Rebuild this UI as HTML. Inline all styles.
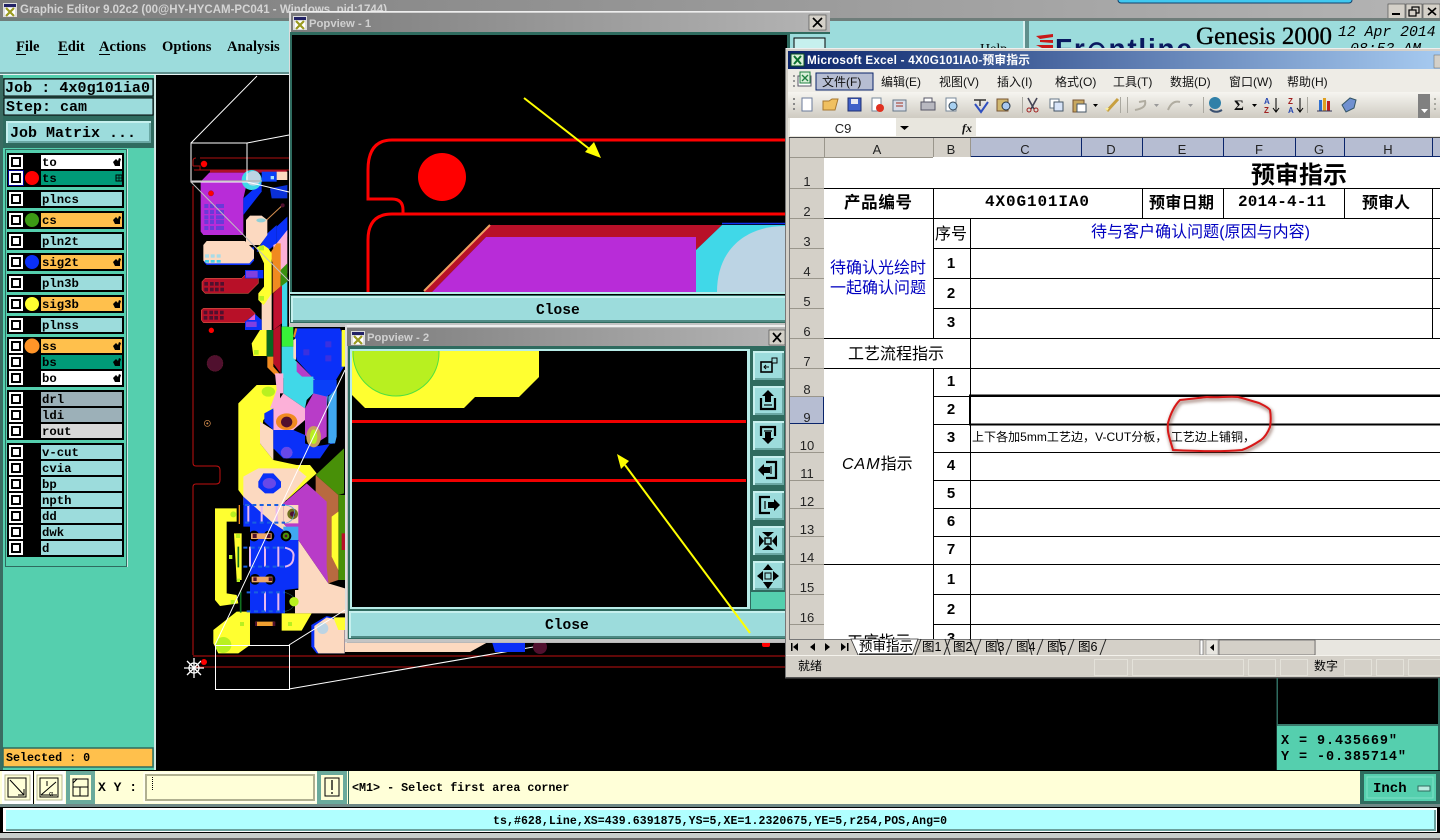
<!DOCTYPE html>
<html><head><meta charset="utf-8"><title>Graphic Editor</title>
<style>
html,body{margin:0;padding:0;background:#000;width:1440px;height:840px;overflow:hidden}
svg{display:block;position:absolute;left:0;top:0}
text{white-space:pre}
.m{font-family:"Liberation Mono",monospace;font-weight:bold;fill:#000}
.s{font-family:"Liberation Serif",serif}
.x{font-family:"Liberation Sans","Noto Sans CJK SC",sans-serif;fill:#000}
.b{font-weight:bold}
.u{fill:#0000c0}
.lay{font-family:"Liberation Mono",monospace;font-weight:bold;font-size:12.3px;fill:#000}
.h{font-family:"Liberation Sans",sans-serif;font-size:13px;fill:#222;text-anchor:middle}
.n{font-family:"Liberation Sans",sans-serif;font-weight:bold;font-size:15px;fill:#000;text-anchor:middle}
.mn{font-family:"Liberation Sans","Noto Sans CJK SC",sans-serif;font-size:12px;fill:#111}
</style></head><body>
<svg width="1440" height="840" viewBox="0 0 1440 840" xmlns="http://www.w3.org/2000/svg">
<defs>
<linearGradient id="gt" x1="0" x2="1" y1="0" y2="0"><stop offset="0" stop-color="#7c7c7c"/><stop offset="1" stop-color="#b4b4b4"/></linearGradient>
<linearGradient id="ge" x1="0" x2="1" y1="0" y2="0"><stop offset="0" stop-color="#0a246a"/><stop offset="1" stop-color="#a6caf0"/></linearGradient>
<linearGradient id="gb" x1="0" x2="0" y1="0" y2="1"><stop offset="0" stop-color="#f6f5f0"/><stop offset="1" stop-color="#cfcbc2"/></linearGradient>
<filter id="blur" x="-10%" y="-10%" width="120%" height="120%"><feGaussianBlur stdDeviation="1.6"/></filter>
<g id="cb"><rect x="0" y="0" width="14" height="14" fill="#fff"/><rect x="2" y="2" width="10" height="10" fill="#000"/><rect x="4" y="4" width="6" height="6" fill="#fff"/></g>
<path id="hand" d="M0 4 L3 1 L5 3 L6 0 L8 1 L7 4 L7 8 L2 8 Z" fill="#000"/>
<g id="ico"><rect x="0" y="0" width="14" height="14" fill="#ddd"/><rect x="1" y="1" width="12" height="3" fill="#226"/><rect x="2" y="5" width="10" height="8" fill="#fff"/><path d="M3 5 L11 13 M11 5 L3 13" stroke="#9a9a20" stroke-width="2.2"/></g>
<g id="sb"><rect x="0" y="0" width="33" height="31" fill="#2f6b5f"/><rect x="1" y="1" width="31" height="29" fill="#c6f0ee"/><rect x="3" y="3" width="29" height="27" fill="#6aa8a4"/><rect x="3" y="3" width="27" height="25" fill="#9cdcdc"/></g>
<clipPath id="c1"><rect x="292" y="35" width="493" height="257"/></clipPath>
<clipPath id="c2"><rect x="352" y="351" width="395" height="256"/></clipPath>
<clipPath id="clogo"><rect x="1030" y="22" width="410" height="26"/></clipPath>
<clipPath id="cgrid"><rect x="790" y="137" width="650" height="502"/></clipPath>
</defs>

<rect width="1440" height="840" fill="#000"/>

<!-- main title -->
<rect x="0" y="0" width="1440" height="18" fill="url(#gt)"/>
<use href="#ico" x="3" y="3"/>
<text x="20" y="13" font-family="Liberation Sans" font-weight="bold" font-size="11.5" fill="#d4d4d4">Graphic Editor 9.02c2 (00@HY-HYCAM-PC041 - Windows, pid:1744)</text>
<rect x="1118" y="-4" width="234" height="7" rx="3" fill="#40c8f0" stroke="#14406a"/>
<g>
<rect x="1388" y="4" width="17" height="15" fill="#d4d0c8" stroke="#444" stroke-width=".6"/><rect x="1392" y="13" width="8" height="2" fill="#000"/>
<rect x="1406" y="4" width="16" height="15" fill="#d4d0c8" stroke="#444" stroke-width=".6"/><rect x="1412" y="7" width="7" height="6" fill="none" stroke="#000" stroke-width="1.2"/><rect x="1409" y="10" width="7" height="6" fill="#d4d0c8" stroke="#000" stroke-width="1.2"/>
<rect x="1423" y="4" width="17" height="15" fill="#d4d0c8" stroke="#444" stroke-width=".6"/><path d="M1428 8 L1436 15 M1436 8 L1428 15" stroke="#000" stroke-width="1.6"/>
</g>

<!-- menu band -->
<rect x="0" y="18" width="1440" height="3" fill="#6f7d7a"/>
<rect x="0" y="21" width="1440" height="53" fill="#9cdcdc"/>
<rect x="0" y="72" width="1440" height="2" fill="#5f8f8c"/>
<rect x="0" y="74" width="1440" height="1" fill="#e8f4f4"/>
<g class="s b" font-size="14.6" font-weight="bold" fill="#000">
<text x="16" y="51">File</text><text x="58" y="51">Edit</text><text x="99" y="51">Actions</text><text x="162" y="51">Options</text><text x="227" y="51">Analysis</text>
</g>
<g stroke="#000" stroke-width="1"><path d="M16 54.5h10M58 54.5h10M99 54.5h11"/></g>
<text x="980" y="53" class="s" font-size="14" fill="#000">Help</text>
<rect x="1023" y="21" width="2" height="30" fill="#d8f0f0"/><rect x="1025" y="21" width="4" height="30" fill="#5f8f8c"/>
<g clip-path="url(#clogo)">
<path d="M1036 36 L1053 34 L1053 37 L1040 39 Z M1040 40 L1053 40 L1053 43 L1040 42Z M1036 45 L1053 45 L1053 48 L1042 48 Z" fill="#c81818"/>
<text x="1055" y="58" font-family="Liberation Sans" font-weight="bold" font-size="28" fill="#0a1a60" textLength="137">Fr<tspan font-size="24">⊙</tspan>ntline</text>
</g>
<text x="1196" y="44" class="s" font-size="25" fill="#000" stroke="#000" stroke-width=".35" textLength="136">Genesis 2000</text>
<text x="1338" y="36" font-family="Liberation Mono" font-style="italic" font-size="14.8" fill="#000">12 Apr 2014</text>
<text x="1350" y="53" font-family="Liberation Mono" font-style="italic" font-size="14.8" fill="#000">08:53 AM</text>

<!-- left panel -->
<rect x="0" y="75" width="155" height="696" fill="#55cfae"/>
<rect x="0" y="75" width="3" height="696" fill="#3a6c62"/>
<rect x="154" y="75" width="2" height="696" fill="#cfe8e4"/>
<rect x="3" y="78" width="151" height="70" fill="#2f6b5f"/>
<rect x="4" y="79" width="149" height="17" fill="#9cdcdc" stroke="#000"/>
<rect x="4" y="98" width="149" height="17" fill="#9cdcdc" stroke="#000"/>
<text x="5" y="92" class="m" font-size="15" textLength="145">Job : 4x0g101ia0</text>
<text x="6" y="111" class="m" font-size="15">Step: cam</text>
<rect x="6" y="121" width="145" height="22" fill="#c6f0ee"/><rect x="8" y="123" width="143" height="20" fill="#6aa8a4"/><rect x="8" y="123" width="141" height="18" fill="#9cdcdc"/>
<text x="10" y="137" class="m" font-size="15">Job Matrix ...</text>

<rect x="5" y="149" width="122" height="418" fill="#2f6b5f"/>
<rect x="127" y="149" width="1" height="418" fill="#cfe8e4"/>
<rect x="6" y="150" width="120" height="416" fill="#55cfae"/>

<!-- layer groups -->
<rect x="7" y="153" width="117" height="34" fill="#000"/>
<rect x="7" y="190" width="117" height="18" fill="#000"/>
<rect x="7" y="211" width="117" height="18" fill="#000"/>
<rect x="7" y="232" width="117" height="18" fill="#000"/>
<rect x="7" y="253" width="117" height="18" fill="#000"/>
<rect x="7" y="274" width="117" height="18" fill="#000"/>
<rect x="7" y="295" width="117" height="18" fill="#000"/>
<rect x="7" y="316" width="117" height="18" fill="#000"/>
<rect x="7" y="337" width="117" height="50" fill="#000"/>
<rect x="7" y="390" width="117" height="50" fill="#000"/>
<rect x="7" y="443" width="117" height="114" fill="#000"/>

<rect x="41" y="155" width="81" height="14" fill="#fff"/>
<rect x="41" y="171" width="81" height="14" fill="#009a78"/>
<rect x="41" y="192" width="81" height="14" fill="#9cdcdc"/>
<rect x="41" y="213" width="81" height="14" fill="#ffc04c"/>
<rect x="41" y="234" width="81" height="14" fill="#9cdcdc"/>
<rect x="41" y="255" width="81" height="14" fill="#ffc04c"/>
<rect x="41" y="276" width="81" height="14" fill="#9cdcdc"/>
<rect x="41" y="297" width="81" height="14" fill="#ffc04c"/>
<rect x="41" y="318" width="81" height="14" fill="#9cdcdc"/>
<rect x="41" y="339" width="81" height="14" fill="#ffc04c"/>
<rect x="41" y="355" width="81" height="14" fill="#009a78"/>
<rect x="41" y="371" width="81" height="14" fill="#fff"/>
<rect x="41" y="392" width="81" height="14" fill="#9cb0b8"/>
<rect x="41" y="408" width="81" height="14" fill="#9cb0b8"/>
<rect x="41" y="424" width="81" height="14" fill="#d8d8d8"/>
<rect x="41" y="445" width="81" height="14" fill="#9cdcdc"/>
<rect x="41" y="461" width="81" height="14" fill="#9cdcdc"/>
<rect x="41" y="477" width="81" height="14" fill="#9cdcdc"/>
<rect x="41" y="493" width="81" height="14" fill="#9cdcdc"/>
<rect x="41" y="509" width="81" height="14" fill="#9cdcdc"/>
<rect x="41" y="525" width="81" height="14" fill="#9cdcdc"/>
<rect x="41" y="541" width="81" height="14" fill="#9cdcdc"/>

<rect x="8" y="170" width="16" height="16" fill="#000090"/>
<use href="#cb" x="9" y="155"/><use href="#cb" x="9" y="171"/><use href="#cb" x="9" y="192"/><use href="#cb" x="9" y="213"/><use href="#cb" x="9" y="234"/><use href="#cb" x="9" y="255"/><use href="#cb" x="9" y="276"/><use href="#cb" x="9" y="297"/><use href="#cb" x="9" y="318"/><use href="#cb" x="9" y="339"/><use href="#cb" x="9" y="355"/><use href="#cb" x="9" y="371"/><use href="#cb" x="9" y="392"/><use href="#cb" x="9" y="408"/><use href="#cb" x="9" y="424"/><use href="#cb" x="9" y="445"/><use href="#cb" x="9" y="461"/><use href="#cb" x="9" y="477"/><use href="#cb" x="9" y="493"/><use href="#cb" x="9" y="509"/><use href="#cb" x="9" y="525"/><use href="#cb" x="9" y="541"/>

<circle cx="32" cy="178" r="7" fill="#ff0000"/>
<circle cx="32" cy="220" r="7" fill="#3c9a14"/>
<circle cx="32" cy="262" r="7" fill="#0a30f8"/>
<circle cx="32" cy="304" r="7" fill="#ffff30"/>
<circle cx="32" cy="346" r="7.5" fill="#ff9428"/>

<g class="lay">
<text x="42" y="166">to</text><text x="42" y="182">ts</text><text x="42" y="203">plncs</text><text x="42" y="224">cs</text><text x="42" y="245">pln2t</text><text x="42" y="266">sig2t</text><text x="42" y="287">pln3b</text><text x="42" y="308">sig3b</text><text x="42" y="329">plnss</text><text x="42" y="350">ss</text><text x="42" y="366">bs</text><text x="42" y="382">bo</text><text x="42" y="403">drl</text><text x="42" y="419">ldi</text><text x="42" y="435">rout</text><text x="42" y="456">v-cut</text><text x="42" y="472">cvia</text><text x="42" y="488">bp</text><text x="42" y="504">npth</text><text x="42" y="520">dd</text><text x="42" y="536">dwk</text><text x="42" y="552">d</text>
</g>
<use href="#hand" x="113" y="158"/><use href="#hand" x="113" y="216"/><use href="#hand" x="113" y="258"/><use href="#hand" x="113" y="300"/><use href="#hand" x="113" y="342"/><use href="#hand" x="113" y="358"/><use href="#hand" x="113" y="374"/>
<rect x="116" y="175" width="6" height="6" fill="none" stroke="#000"/><path d="M119 175v6M116 178h6" stroke="#000" stroke-width=".7"/>

<rect x="3" y="748" width="150" height="19" fill="#ffc04c" stroke="#2f6b5f" stroke-width="1.5"/>
<text x="6" y="761" class="m" font-size="11.7">Selected : 0</text>

<!-- PCB outline -->
<path d="M193 186 V463 Q193 466 196 466 H216 Q220 466 220 470 V480 Q220 484 216 484 H196 Q193 484 193 487 V655" fill="none" stroke="#c01010" stroke-width="1"/>
<path d="M200 158 H292 M193 166 V161 Q193 158 196 158 M193 166 H200 V170 H194 M200 170 H292" fill="none" stroke="#b01010" stroke-width="1"/>
<path d="M193 656 H785 M193 667 H785" stroke="#c01010" stroke-width="1" fill="none"/>
<circle cx="204" cy="164" r="3.2" fill="#ff0000"/>

<!-- top copper, zoom-3 coordinates -->
<g transform="translate(160,130) scale(.33333)">
<path d="M150 120H380V128H150Z" fill="#b01028"/>
<path d="M122 155L148 128H262V155L250 205V315H130L122 305Z" fill="#b82cd8"/>
<path d="M250 205L305 155V185L250 255Z" fill="#0a30f8"/>
<path d="M305 125H350V155H305Z" fill="#0a40f8"/><rect x="332" y="138" width="10" height="10" fill="#a8e0f8"/>
<path d="M350 125H382V150H350Z" fill="#fcd9c0"/>
<circle cx="275" cy="150" r="30" fill="#40d8e8"/><circle cx="280" cy="145" r="22" fill="#bcd4e4"/>
<path d="M330 175L382 165V205L335 205Z" fill="#0a30d8"/>
<path d="M320 270L365 228" stroke="#d89050" stroke-width="3"/><circle cx="368" cy="226" r="6" fill="#50102e"/>
<path d="M322 310L350 285V340L320 365H290Z" fill="#0a30f8"/>
<path d="M350 290L382 260V320L350 345Z" fill="#0a30f8"/>
<path d="M258 270L270 257H305L322 270V315L300 345H258Z" fill="#fcd9c0"/>
<ellipse cx="303" cy="271" rx="14" ry="6" fill="#90d0d8"/>
<path d="M132 352H282V392L270 405H140L132 396Z" fill="#0a30f8"/>
<path d="M130 345L140 333H255L282 360V385L268 400H140L130 392Z" fill="#fcd9c0"/>
<g fill="#a8dce8"><rect x="135" y="373" width="12" height="10"/><rect x="152" y="373" width="12" height="10"/><rect x="170" y="373" width="12" height="10"/><rect x="135" y="390" width="12" height="8" fill="#48d0e8"/><rect x="152" y="390" width="12" height="8" fill="#48d0e8"/><rect x="170" y="390" width="12" height="8" fill="#48d0e8"/></g>
<path d="M350 340L382 300V430L340 445V345Z" fill="#fcb0d8"/>
<path d="M330 370L350 340H362V470L338 490V400Z" fill="#f08a20"/>
<path d="M340 490L366 465V580L340 600Z" fill="#c01030"/>
<path d="M366 465L382 440V590H366Z" fill="#40d8e8"/>
<path d="M362 420L382 400V455L362 470Z" fill="#389010"/>
<path d="M305 495L335 490V600H305Z" fill="#fcd9c0"/>
<path d="M290 352L310 345L325 355L335 370V490L315 520L310 525L295 510V490L312 470V400Z" fill="#ffff30"/>
<rect x="296" y="347" width="16" height="14" fill="#b8f020"/><rect x="298" y="498" width="14" height="14" fill="#b8f020"/>
<path d="M126 455L135 445H245L255 435H295V460L265 490H135L126 480Z" fill="#b81028" stroke="#f07050" stroke-width="1.5"/>
<g fill="#50102e"><rect x="133" y="456" width="11" height="11"/><rect x="150" y="456" width="11" height="11"/><rect x="165" y="456" width="11" height="11"/><rect x="181" y="456" width="11" height="11"/><rect x="133" y="473" width="11" height="11"/><rect x="150" y="473" width="11" height="11"/><rect x="165" y="473" width="11" height="11"/><rect x="181" y="473" width="11" height="11"/></g>
<path d="M255 420H310V445H255Z" fill="#0a30f8"/><rect x="258" y="423" width="35" height="20" fill="#8040e0"/>
<path d="M124 540L130 535H270L285 550V570L270 578H130L124 570Z" fill="#b81028" stroke="#f07050" stroke-width="1.5"/>
<g fill="#50102e"><rect x="131" y="542" width="11" height="11"/><rect x="148" y="542" width="11" height="11"/><rect x="163" y="542" width="11" height="11"/><rect x="180" y="542" width="11" height="11"/><rect x="131" y="558" width="11" height="11"/><rect x="148" y="558" width="11" height="11"/><rect x="163" y="558" width="11" height="11"/><rect x="180" y="558" width="11" height="11"/></g>
<path d="M255 575L285 552L305 570V600H255Z" fill="#0a30f8"/><rect x="258" y="575" width="32" height="16" fill="#8040e0"/><path d="M265 570L285 552V570Z" fill="#e860d0"/>
<path d="M275 640L300 600H320V678H280Z" fill="#ffff30"/><rect x="282" y="660" width="14" height="14" fill="#b8f020"/>
<path d="M320 600H340V680H320Z" fill="#086820"/>
<path d="M340 600L362 585V730L340 700Z" fill="#b81028"/>
<path d="M322 680H340V710L362 735V752L322 712Z" fill="#f08a20"/>
<path d="M365 590H400V650H365Z" fill="#38f038"/>
<path d="M365 650H402L405 690L460 745V790H425L365 740Z" fill="#40d8e8"/>
<path d="M405 595H412L408 625L400 620Z" fill="#f08a20"/>
<path d="M412 595H540L552 620V710L510 780L460 745L410 690L400 640Z" fill="#0a30f8"/>
<path d="M400 630L408 625V690L400 685Z" fill="#fcd9c0"/>
<g fill="#3a30e0"><rect x="496" y="634" width="18" height="18"/><rect x="430" y="658" width="18" height="18"/><rect x="496" y="676" width="18" height="18"/></g>
<path d="M410 695L460 745V772L410 725Z" fill="#b83cc8"/>
<path d="M460 745L505 780L500 840H460Z" fill="#40a8f0"/>
<path d="M545 600H555V710H545Z" fill="#ffff30"/>
<!-- dots grid on purple -->
<g fill="#6a3ad8"><rect x="133" y="222" width="12" height="12"/><rect x="150" y="222" width="12" height="12"/><rect x="168" y="222" width="12" height="12"/><rect x="180" y="222" width="12" height="12"/><rect x="133" y="240" width="12" height="12"/><rect x="150" y="240" width="12" height="12"/><rect x="168" y="240" width="12" height="12"/><rect x="180" y="240" width="12" height="12"/><rect x="133" y="256" width="12" height="12"/><rect x="150" y="256" width="12" height="12"/><rect x="168" y="256" width="12" height="12"/><rect x="180" y="256" width="12" height="12"/><rect x="133" y="270" width="12" height="12"/><rect x="150" y="270" width="12" height="12"/><rect x="168" y="270" width="12" height="12"/><rect x="180" y="270" width="12" height="12"/><rect x="133" y="288" width="12" height="12"/><rect x="150" y="288" width="12" height="12"/><rect x="168" y="288" width="12" height="12"/><rect x="180" y="288" width="12" height="12"/></g>
<circle cx="153" cy="190" r="8" fill="#ff0000" stroke="#801020"/>
<circle cx="154" cy="601" r="8" fill="#ff0000"/>
<circle cx="165" cy="700" r="24" fill="#50102e" stroke="#903040" stroke-dasharray="3 2"/>
</g>

<!-- lower copper, zoom-4 coordinates -->
<g transform="translate(170,380) scale(.33333)">
<path d="M205 70L260 15H330V60L310 90L280 120L270 190L310 240L380 255H420L440 280L350 360L220 350L205 330Z" fill="#ffff30"/>
<path d="M340 -10H430V40L410 60L405 85L340 40Z" fill="#40d8e8"/>
<path d="M315 -20H340V40H330V60L310 85H300L320 30Z" fill="#fcb0d8"/>
<path d="M310 85L340 40L405 85V120L370 150H310Z" fill="#fcb0d8"/>
<path d="M283 100L310 85V150L283 125Z" fill="#0a30f8"/>
<path d="M270 125L310 150V240L270 190Z" fill="#fcd9c0"/>
<path d="M310 150H370L405 165V190L430 200L495 190V170L450 235H340L310 205Z" fill="#0a30f8"/>
<path d="M430 0H500V30L470 50L430 40Z" fill="#0a40f8"/>
<path d="M475 50L500 25V170L495 190H475Z" fill="#40a8f0"/>
<path d="M405 85L430 40L470 50V170L430 195L405 165Z" fill="#b83cc8"/>
<ellipse cx="350" cy="125" rx="32" ry="25" fill="#f08a20"/><ellipse cx="350" cy="126" rx="17" ry="16" fill="#50102e"/>
<ellipse cx="295" cy="35" rx="20" ry="15" fill="#b8f020"/>
<ellipse cx="431" cy="170" rx="22" ry="32" fill="#c8a060"/><ellipse cx="431" cy="170" rx="11" ry="22" fill="#b8f020"/>
<circle cx="350" cy="218" r="17" fill="#6848e8" stroke="#9070f0" stroke-dasharray="2 2"/>
<path d="M437 285L522 205V340L505 345Z" fill="#489008"/>
<path d="M505 345H530V600H505Z" fill="#489008"/>
<path d="M220 290L265 265H380L410 290L340 370V430L385 480L475 610L525 625V700H375V630H385V480L310 430L220 375Z" fill="#fcd9c0"/>
<path d="M437 285L505 345V600L475 610L437 500Z" fill="#b86a40"/>
<path d="M340 370L410 310L470 365V560L475 610L385 480L340 430Z" fill="#b83cc8"/>
<path d="M485 410L505 395V570L485 530Z" fill="#ffff30"/>
<path d="M265 305L280 280H310L333 305V322L310 340H285L265 322Z" fill="#0a30f8"/><ellipse cx="298" cy="310" rx="20" ry="16" fill="#6848e8"/>
<path d="M220 350L310 430L385 480V625L345 630V700H240V440H220Z" fill="#0a30f8"/>
<path d="M340 375H385V430L340 430Z" fill="#fcd9c0"/>
<circle cx="368" cy="402" r="16" fill="#707020"/><circle cx="368" cy="402" r="8" fill="#50102e"/>
<path d="M340 440L385 440V480H340Z" fill="#40a8f0"/>
<path d="M135 385H200V425H170V640L200 645L205 670L150 678L135 660Z" fill="#ffff30"/>
<path d="M192 460H215V600H200Z" fill="#ffff30"/>
<path d="M130 750L200 695H240V795L205 820H145L130 790Z" fill="#ffff30"/>
<circle cx="160" cy="795" r="24" fill="#b8f020"/>
<path d="M335 700H425L395 752H335Z" fill="#ffff30"/>
<path d="M424 735L470 708L524 720V820H440L424 800Z" fill="#0a30f8"/>
<path d="M433 738L470 712L524 725V820H445L433 800Z" fill="#fcd9c0"/>
<circle cx="458" cy="745" r="17" fill="#bcd4e4"/>
<path d="M490 712H525V750H505Z" fill="#ffff30"/>
<!-- holes -->
<g fill="#000"><circle cx="252" cy="468" r="16"/><circle cx="297" cy="468" r="16"/><circle cx="348" cy="468" r="16"/><circle cx="255" cy="598" r="16"/><circle cx="300" cy="598" r="16"/></g>
<rect x="243" y="460" width="62" height="17" fill="#f0a868"/><rect x="248" y="462" width="12" height="12" fill="#50102e"/><rect x="290" y="462" width="12" height="12" fill="#50102e"/>
<circle cx="348" cy="468" r="10" fill="#489008"/><circle cx="348" cy="468" r="4" fill="#50102e"/>
<rect x="245" y="590" width="62" height="17" fill="#f0a868"/><rect x="250" y="592" width="10" height="11" fill="#50102e"/><rect x="296" y="592" width="10" height="11" fill="#50102e"/>
<rect x="255" y="725" width="60" height="13" rx="3" fill="#f0a030"/><rect x="255" y="725" width="6" height="13" fill="#50102e"/><rect x="308" y="725" width="8" height="13" fill="#50102e"/>
<!-- dashed shapes -->
<g stroke="#e8b8f0" stroke-width="6" fill="none"><path d="M235 375V425M275 375V425M320 375V425"/><path d="M240 500V560M285 500V560M325 500V560"/><path d="M285 635V695M325 635V695"/></g>
<g stroke="#1a60e0" stroke-width="6" stroke-dasharray="12 10" fill="none"><path d="M225 375H345M225 428H345"/><path d="M220 503H345M220 560H345"/><path d="M230 637H345M230 694H345"/></g>
<path d="M345 375Q380 380 372 402Q370 425 345 430" stroke="#50a8e8" stroke-width="2" fill="none"/>
<path d="M345 503Q375 510 370 532Q370 555 345 560" stroke="#e8b8f0" stroke-width="6" fill="none"/>
<path d="M345 637Q380 650 375 665Q370 690 345 694" stroke="#285050" stroke-width="2" fill="none"/><circle cx="372" cy="665" r="14" fill="#b8f020"/>
<path d="M208 375V432" stroke="#f08a20" stroke-width="4"/>
<path d="M205 500V562M212 635V698" stroke="#107020" stroke-width="5"/>
<g fill="#b8f020"><circle cx="190" cy="403" r="9"/><rect x="198" y="462" width="12" height="12"/><rect x="177" y="525" width="10" height="12"/><rect x="200" y="596" width="10" height="10"/><rect x="182" y="660" width="12" height="12"/><rect x="210" y="726" width="12" height="12"/><rect x="354" y="726" width="12" height="12"/></g>
<circle cx="112" cy="130" r="9" fill="none" stroke="#d89050" stroke-width="2"/><circle cx="112" cy="130" r="3" fill="#d89050"/>
<rect x="515" y="460" width="10" height="50" fill="#b81028"/>
</g>

<!-- white projection lines -->
<g fill="none" stroke="#fff" stroke-width="1">
<path d="M191 143H247V182H191Z"/><path d="M191 143L257 76M247 143L289 135M247 182L289 192"/>
<path d="M215.500 645.500H289.500V689.500H215.500Z"/><path d="M215 645L345 370M289 645L345 610M289 689L545 645"/>
<path d="M191 182L289 281" stroke="#c0c0c0"/>
</g>
<path d="M191 181H262" stroke="#b0b0b0" stroke-width="1.2"/>
<!-- bottom-left target -->
<g stroke="#fff" stroke-width="1.3" fill="none"><path d="M184 668H204M194 658V678M187 661L201 675M201 661L187 675"/><circle cx="194" cy="668" r="5"/></g>
<circle cx="204" cy="662" r="3" fill="#ff0000"/>
<!-- strip below popview 2 -->
<path d="M345 642H488L470 652H345Z" fill="#fcd9c0"/><path d="M492 642H525V652H495Z" fill="#0a30f8"/>
<circle cx="540" cy="647" r="7" fill="#50102e"/><rect x="762" y="641" width="8" height="6" rx="2" fill="#ff0000"/>

<!-- POPVIEW 1 -->
<rect x="289" y="11" width="541" height="316" fill="#b8b8b8"/>
<rect x="289" y="11" width="541" height="1.500" fill="#eee"/><rect x="289" y="11" width="2" height="316" fill="#ddd"/>
<rect x="291" y="13" width="537" height="19" fill="url(#gt)"/>
<use href="#ico" x="293" y="16"/>
<text x="309" y="27" font-family="Liberation Sans" font-weight="bold" font-size="11.3" fill="#d0d0d0">Popview - 1</text>
<rect x="809" y="15" width="17" height="15" fill="#d4d0c8" stroke="#444" stroke-width=".6"/><path d="M813 18L822 27M822 18L813 27" stroke="#000" stroke-width="1.7"/>
<rect x="290" y="32" width="540" height="294" fill="#2f6b5f"/>
<rect x="292" y="35" width="495" height="257" fill="#000"/>
<rect x="790" y="34" width="40" height="30" fill="#9cdcdc"/><rect x="794" y="38" width="31" height="30" fill="#c6f0ee" stroke="#000"/>
<g clip-path="url(#c1)">
<path d="M785 140H392Q368 140 368 170V199H392Q403 199 403 210V214M785 214H392Q368 214 368 240V292" fill="none" stroke="#ff0000" stroke-width="3"/>
<circle cx="442" cy="177" r="24" fill="#ff0000"/>
<path d="M490 225H722L696 250V237H486L432 292H424Z" fill="#b81028"/>
<path d="M486 237H696V292H432Z" fill="#b82cd8"/>
<path d="M490 225L424 291" stroke="#f0a060" stroke-width="2"/>
<path d="M696 250L722 225H785V292H696Z" fill="#40d8e8"/>
<path d="M722 223.500H785" stroke="#1030f0" stroke-width="1.500"/>
<path d="M717 292C717 250 745 226 785 226V292Z" fill="#bcd4e4"/>
<path d="M524 98L592 151" stroke="#ffff00" stroke-width="2"/>
<path d="M601 158L585 152L594 142Z" fill="#ffff00"/>
</g>
<rect x="290" y="292" width="540" height="2" fill="#b8ece8"/>
<rect x="290" y="294" width="540" height="1" fill="#000"/>
<rect x="291" y="296" width="495" height="26" fill="#c6f0ee"/><rect x="293" y="298" width="495" height="24" fill="#4f8a84"/><rect x="293" y="298" width="495" height="22" fill="#9cdcdc"/>
<text x="536" y="314" class="m" font-size="14.6">Close</text>
<rect x="289" y="323" width="500" height="4" fill="#c4c4c4"/>

<!-- POPVIEW 2 -->
<rect x="345" y="325" width="440" height="318" fill="#b8b8b8"/>
<rect x="345" y="325" width="440" height="2" fill="#eee"/><rect x="345" y="325" width="2" height="318" fill="#ddd"/>
<rect x="347" y="328" width="438" height="18" fill="url(#gt)"/>
<use href="#ico" x="351" y="331"/>
<text x="367" y="341" font-family="Liberation Sans" font-weight="bold" font-size="11.3" fill="#d0d0d0">Popview - 2</text>
<rect x="769" y="330" width="16" height="15" fill="#d4d0c8" stroke="#444" stroke-width=".6"/><path d="M773 333L781 342M781 333L773 342" stroke="#000" stroke-width="1.7"/>
<rect x="348" y="346" width="437" height="293" fill="#2f6b5f"/>
<rect x="350" y="349" width="400" height="260" fill="#b8ece8"/>
<rect x="352" y="351" width="395" height="256" fill="#000"/>
<g clip-path="url(#c2)">
<path d="M352 351H539V377L519 397H475L464 408H365L352 395Z" fill="#ffff30"/>
<circle cx="396" cy="353" r="43" fill="#b8f020" stroke="#50e040"/>
<path d="M352 421.500H746M352 480.500H746" stroke="#f00000" stroke-width="3"/>
</g>
<rect x="751" y="349" width="34" height="260" fill="#2f6b5f"/>
<use href="#sb" x="752" y="350"/><use href="#sb" x="752" y="385"/><use href="#sb" x="752" y="420"/><use href="#sb" x="752" y="455"/><use href="#sb" x="752" y="490"/><use href="#sb" x="752" y="525"/><use href="#sb" x="752" y="560"/>
<g fill="none" stroke="#000">
<!-- icon 1 -->
<rect x="761" y="362" width="11" height="10" stroke-width="1.6"/><rect x="772" y="358" width="5" height="5" stroke-width="1" fill="#9cdcdc"/><path d="M769 367H764M766 365L764 367L766 369" stroke-width="1"/>
<!-- icon 2: up into tray -->
<path d="M761 398V409H775V398" stroke-width="2.2"/><path d="M764 405H772" stroke-width="1.2"/>
<!-- icon 3: down out of frame -->
<path d="M761 436V427H775V436" stroke-width="2.2"/><path d="M764 431H772" stroke-width="1.2"/>
<!-- icon 4: left -->
<path d="M766 462H776V478H766" stroke-width="2.2"/><path d="M771 466V474" stroke-width="1.2"/>
<!-- icon 5: right -->
<path d="M770 497H760V513H770" stroke-width="2.2"/><path d="M765 501V509" stroke-width="1.2"/>
<rect x="765" y="538" width="6" height="6" stroke-width="1.4"/><rect x="765" y="573" width="6" height="6" stroke-width="1"/>
</g>
<g fill="#000">
<path d="M768 390L762 396H765V402H771V396H774Z"/>
<path d="M768 444L762 438H765V432H771V438H774Z"/>
<path d="M758 470L764 464V467H770V473H764V476Z"/>
<path d="M780 505L774 499V502H768V508H774V511Z"/>
<path d="M762 532H774L768 537ZM762 550H774L768 545ZM759 535V547L764 541ZM777 535V547L772 541Z"/>
<path d="M768 564L763 570H773ZM768 589L763 582H773ZM757 576L763 571V581ZM779 576L773 571V581Z"/>
</g>
<rect x="751" y="592" width="34" height="18" fill="#55cfae"/>
<rect x="348" y="609" width="437" height="2" fill="#2f6b5f"/>
<rect x="349" y="611" width="436" height="27" fill="#c6f0ee"/><rect x="351" y="613" width="434" height="25" fill="#4f8a84"/><rect x="351" y="613" width="434" height="23" fill="#9cdcdc"/>
<text x="545" y="629" class="m" font-size="14.6">Close</text>
<path d="M617 454L629 461L621 469Z" fill="#ffff00"/>
<path d="M625 465L750 633" stroke="#ffff00" stroke-width="2"/>
<rect x="345" y="639" width="440" height="3" fill="#c4c4c4"/>

<!-- EXCEL -->
<rect x="785" y="48" width="655" height="630" fill="#d4d0c8"/>
<rect x="785" y="48" width="655" height="1" fill="#eee"/><rect x="785" y="48" width="1" height="630" fill="#777"/>
<rect x="788" y="51" width="652" height="18" fill="url(#ge)"/>
<rect x="791" y="54" width="13" height="12" fill="#d8f0d8" stroke="#085020"/><path d="M794 56L801 64M801 56L794 64" stroke="#0a7030" stroke-width="2"/>
<text x="807" y="64" class="x b" font-size="11.700" style="fill:#fff" textLength="223">Microsoft Excel - 4X0G101IA0-预审指示</text>
<rect x="1434" y="55" width="8" height="13" fill="#d4d0c8" stroke="#666" stroke-width=".5"/>
<rect x="788" y="69" width="652" height="23" fill="#eeece6"/>
<g fill="#999"><rect x="793" y="75" width="2" height="2"/><rect x="793" y="80" width="2" height="2"/><rect x="793" y="85" width="2" height="2"/></g>
<rect x="798" y="76" width="13" height="10" fill="#fff" stroke="#556"/><rect x="800" y="72" width="10" height="11" fill="#d8f0d8" stroke="#208040"/><path d="M802 75L808 81M808 75L802 81" stroke="#208040" stroke-width="1.4"/>
<rect x="816" y="73" width="57" height="17" fill="#b6bdd2" stroke="#0a246a"/>
<g class="mn">
<text x="822" y="86">文件(F)</text><text x="881" y="86">编辑(E)</text><text x="939" y="86">视图(V)</text><text x="997" y="86">插入(I)</text><text x="1055" y="86">格式(O)</text><text x="1113" y="86">工具(T)</text><text x="1170" y="86">数据(D)</text><text x="1229" y="86">窗口(W)</text><text x="1287" y="86">帮助(H)</text>
</g>
<!-- toolbar -->
<rect x="788" y="92" width="652" height="26" fill="url(#gb)"/>
<g fill="#888"><rect x="793" y="98" width="2" height="2"/><rect x="793" y="103" width="2" height="2"/><rect x="793" y="108" width="2" height="2"/></g>
<rect x="802" y="98" width="10" height="13" fill="#fff" stroke="#6a7a9a"/>
<path d="M823 101H829L832 99H838L835 110H823Z" fill="#f0c060" stroke="#a87830"/>
<rect x="848" y="98" width="13" height="13" fill="#4060c8" stroke="#203070"/><rect x="851" y="99" width="7" height="5" fill="#e8e8f0"/>
<rect x="872" y="98" width="9" height="13" fill="#fff" stroke="#789"/><circle cx="880" cy="108" r="4" fill="#e03020"/>
<rect x="893" y="100" width="13" height="11" fill="#d8dce8" stroke="#678"/><path d="M896 103H903M896 106H903" stroke="#a03020"/>
<rect x="921" y="102" width="14" height="8" fill="#b8b8c0" stroke="#556"/><rect x="924" y="98" width="8" height="4" fill="#fff" stroke="#556"/>
<rect x="946" y="98" width="10" height="13" fill="#fff" stroke="#789"/><circle cx="953" cy="106" r="4" fill="#a8d0f0" stroke="#345"/>
<path d="M974 100H986M980 100V106" stroke="#333" stroke-width="1.4"/><path d="M975 104L981 112L988 102" fill="none" stroke="#3050c0" stroke-width="2"/>
<rect x="997" y="99" width="11" height="12" fill="#d0b870" stroke="#753"/><circle cx="1006" cy="106" r="4" fill="#a8c8f0" stroke="#234"/>
<path d="M1028 98L1034 109M1037 98L1031 109" stroke="#445" stroke-width="1.6"/><circle cx="1029" cy="110" r="2" fill="none" stroke="#a02020"/><circle cx="1036" cy="110" r="2" fill="none" stroke="#a02020"/>
<rect x="1050" y="99" width="9" height="9" fill="#fff" stroke="#678"/><rect x="1054" y="102" width="9" height="9" fill="#d8e4f8" stroke="#456"/>
<rect x="1073" y="100" width="11" height="12" fill="#c8a860" stroke="#753"/><rect x="1077" y="104" width="9" height="8" fill="#fff" stroke="#456"/>
<path d="M1093 104h5l-2.500 3z" fill="#000"/>
<path d="M1107 111L1118 99" stroke="#c8a040" stroke-width="3"/><path d="M1107 111l-2-3 4 0z" fill="#f8f0a0"/>
<path d="M1135 110Q1147 108 1145 101L1139 102" fill="none" stroke="#b0acA0" stroke-width="2"/><path d="M1168 110Q1172 100 1180 102" fill="none" stroke="#b0aca0" stroke-width="2"/>
<path d="M1154 104h5l-2.500 3zM1188 104h5l-2.500 3z" fill="#999"/>
<g stroke="#aaa8a0"><path d="M1127.500 97V113M1203.500 97V113M1120.500 97V113M1022.500 97V113M974 97"/></g>
<circle cx="1215" cy="103" r="6" fill="#3080a8"/><path d="M1210 109Q1215 114 1222 110" stroke="#3a5070" stroke-width="2" fill="none"/>
<text x="1234" y="110" font-family="Liberation Serif" font-size="15" font-weight="bold" fill="#111">Σ</text>
<path d="M1252 104h5l-2.500 3z" fill="#000"/>
<text x="1264" y="104" font-family="Liberation Sans" font-weight="bold" font-size="8" fill="#2848b0">A</text><text x="1264" y="113" font-family="Liberation Sans" font-weight="bold" font-size="8" fill="#a02020">Z</text><path d="M1276 98V111M1273 108L1276 112L1279 108" stroke="#000" fill="none"/>
<text x="1288" y="104" font-family="Liberation Sans" font-weight="bold" font-size="8" fill="#a02020">Z</text><text x="1288" y="113" font-family="Liberation Sans" font-weight="bold" font-size="8" fill="#2848b0">A</text><path d="M1300 98V111M1297 108L1300 112L1303 108" stroke="#000" fill="none"/>
<path d="M1307.500 97V113" stroke="#aaa8a0"/>
<rect x="1319" y="100" width="3" height="11" fill="#3070d0"/><rect x="1323" y="98" width="3" height="13" fill="#e0a020"/><rect x="1327" y="101" width="3" height="10" fill="#c02020"/><path d="M1317 111H1332" stroke="#335"/>
<path d="M1342 105L1350 98L1356 100L1354 108L1346 112Z" fill="#7090d0" stroke="#356"/>
<rect x="1418" y="94" width="12" height="24" fill="#808080"/><path d="M1421 109h7l-3.500 4z" fill="#fff"/>
<g fill="#a8a8a0"><rect x="1434" y="98" width="2" height="2"/><rect x="1434" y="103" width="2" height="2"/><rect x="1434" y="108" width="2" height="2"/></g>
<!-- formula bar -->
<rect x="788" y="118" width="652" height="19" fill="#e8e6de"/>
<rect x="790" y="118" width="106" height="18" fill="#fff"/>
<text x="843" y="133" font-family="Liberation Sans" font-size="13" text-anchor="middle" fill="#222">C9</text>
<path d="M900 126h9l-4.500 4z" fill="#000"/>
<text x="962" y="132" font-family="Liberation Serif" font-style="italic" font-weight="bold" font-size="12" fill="#111">fx</text>
<rect x="976" y="118" width="464" height="18" fill="#fff"/>
<!-- grid -->
<rect x="789" y="137" width="651" height="502" fill="#fff"/>
<rect x="789" y="137" width="651" height="1" fill="#444"/>
<rect x="789" y="138" width="1" height="501" fill="#777"/>
<rect x="790" y="138" width="650" height="19" fill="#d4d0c8"/>
<rect x="790" y="157" width="34" height="482" fill="#d4d0c8"/>
<rect x="970" y="138" width="470" height="19" fill="#b6bdd2"/>
<path d="M970 156.500H1440" stroke="#0a246a"/>
<rect x="790" y="396" width="34" height="28" fill="#b6bdd2"/>
<path d="M823.500 396V424M790 423.500H824" stroke="#0a246a"/>
<g stroke="#9a968c" fill="none"><path d="M824.500 138V157M933.500 138V157M970.500 138V157"/><path d="M790 157.500H933M790 188.500H824M790 218.500H824M790 248.500H824M790 278.500H824M790 308.500H824M790 338.500H824M790 368.500H824M790 396.500H824M790 452.500H824M790 480.500H824M790 508.500H824M790 536.500H824M790 564.500H824M790 594.500H824M790 624.500H824"/></g>
<g stroke="#0a246a" fill="none"><path d="M1081.500 138V157M1142.500 138V157M1223.500 138V157M1295.500 138V157M1344.500 138V157M1432.500 138V157"/></g>
<g class="h">
<text x="877" y="154">A</text><text x="951" y="154">B</text><text x="1025" y="154">C</text><text x="1111" y="154">D</text><text x="1182" y="154">E</text><text x="1259" y="154">F</text><text x="1319" y="154">G</text><text x="1388" y="154">H</text>
<text x="807" y="186">1</text><text x="807" y="216">2</text><text x="807" y="246">3</text><text x="807" y="276">4</text><text x="807" y="306">5</text><text x="807" y="336">6</text><text x="807" y="366">7</text><text x="807" y="394">8</text><text x="807" y="422">9</text><text x="807" y="450">10</text><text x="807" y="478">11</text><text x="807" y="506">12</text><text x="807" y="534">13</text><text x="807" y="562">14</text><text x="807" y="592">15</text><text x="807" y="622">16</text>
</g>
<g stroke="#000" stroke-width="1" fill="none" clip-path="url(#cgrid)">
<path d="M824 188.500H1440M824 218.500H1440M933 248.500H1440M933 278.500H1440M933 308.500H1440M824 338.500H1440M824 368.500H1440M933 396.500H1440M933 424.500H1440M933 452.500H1440M933 480.500H1440M933 508.500H1440M933 536.500H1440M824 564.500H1440M933 594.500H1440M933 624.500H1440"/>
<path d="M933.500 188V338M970.500 218V640M933.500 368V640M1142.500 188V218M1223.500 188V218M1344.500 188V218M1432.500 188V338"/>
</g>
<rect x="970" y="395.500" width="472" height="29" fill="none" stroke="#000" stroke-width="2"/>
<g clip-path="url(#cgrid)">
<text x="1299" y="183" class="x b" font-size="24" text-anchor="middle">预审指示</text>
<text x="844" y="208" class="x b" font-size="16.500" textLength="68">产品编号</text>
<text x="985" y="206" font-family="Liberation Mono" font-weight="bold" font-size="16" fill="#000" textLength="104">4X0G101IA0</text>
<text x="1149" y="208" class="x b" font-size="16" textLength="65">预审日期</text>
<text x="1238" y="206" font-family="Liberation Mono" font-weight="bold" font-size="16" fill="#000" textLength="88">2014-4-11</text>
<text x="1362" y="208" class="x b" font-size="16">预审人</text>
<text x="935" y="239" class="x" font-size="16">序号</text>
<text x="1091" y="237" class="x u" font-size="16" textLength="219">待与客户确认问题(原因与内容)</text>
<text x="830" y="273" class="x u" font-size="16">待确认光绘时</text>
<text x="830" y="293" class="x u" font-size="16">一起确认问题</text>
<text x="848" y="359" class="x" font-size="16">工艺流程指示</text>
<text x="842" y="469" class="x" font-size="16"><tspan font-style="italic" letter-spacing="1">CAM</tspan>指示</text>
<text x="847" y="647" class="x" font-size="16">工序指示</text>
<text x="951" y="268" class="n">1</text><text x="951" y="298" class="n">2</text><text x="951" y="327" class="n">3</text>
<text x="951" y="386" class="n">1</text><text x="951" y="414" class="n">2</text><text x="951" y="442" class="n">3</text><text x="951" y="470" class="n">4</text><text x="951" y="498" class="n">5</text><text x="951" y="526" class="n">6</text><text x="951" y="554" class="n">7</text>
<text x="951" y="584" class="n">1</text><text x="951" y="614" class="n">2</text><text x="951" y="643" class="n">3</text>
<text x="972" y="441" class="x" font-size="12" textLength="283">上下各加5mm工艺边，V-CUT分板， 工艺边上铺铜，</text>
</g>
<!-- red hand-drawn circle -->
<path d="M1173 450C1169 436 1167 432 1168 423C1171 412 1175 405 1180 400C1190 399 1198 398 1207 397C1218 398 1228 396 1238 397C1246 399 1252 401 1259 403C1263 405 1268 407 1270 410C1271 416 1271 421 1270 427C1268 432 1265 437 1261 440C1255 444 1248 448 1242 450C1220 452 1195 451 1173 450Z" fill="none" stroke="#704030" stroke-width="3.500" opacity=".55" filter="url(#blur)" transform="translate(1,2)"/>
<path d="M1173 450C1169 436 1167 432 1168 423C1171 412 1175 405 1180 400C1190 399 1198 398 1207 397C1218 398 1228 396 1238 397C1246 399 1252 401 1259 403C1263 405 1268 407 1270 410C1271 416 1271 421 1270 427C1268 432 1265 437 1261 440C1255 444 1248 448 1242 450C1220 452 1195 451 1173 450Z" fill="none" stroke="#d81818" stroke-width="2"/>

<!-- tabs -->
<rect x="789" y="639" width="651" height="16" fill="#d4d0c8"/>
<path d="M789 639.500H1440" stroke="#777"/>
<g fill="#000"><path d="M796 643V651H797.500V643ZM803 643V651L798 647Z" transform="translate(-5 0)"/><path d="M815 643V651L810 647Z"/><path d="M825 643V651L830 647Z"/><path d="M841 643V651L846 647ZM847 643V651H848.500V643Z"/></g>
<path d="M851 639L858 655H912L918 639Z" fill="#fff" stroke="#333" stroke-width=".8"/>
<text x="859" y="651" class="x" font-size="13.500">预审指示</text>
<path d="M859 654H912" stroke="#000"/>
<g stroke="#222" fill="none"><path d="M921 639L915 655M944 655L950 639M950 655L945 639M975 655L981 639M976 655L970 639M1006 655L1012 639M1001 655L997 639M1037 655L1043 639M1032 655L1028 639M1068 655L1074 639M1063 655L1059 639M1100 655L1106 639"/></g>
<g class="x" font-size="12.500">
<text x="922" y="651">图1</text><text x="953" y="651">图2</text><text x="985" y="651">图3</text><text x="1016" y="651">图4</text><text x="1047" y="651">图5</text><text x="1078" y="651">图6</text>
</g>
<rect x="1200" y="640" width="3" height="15" fill="#fff" stroke="#555" stroke-width=".6"/>
<rect x="1206" y="640" width="12" height="15" fill="#e8e6e0" stroke="#888" stroke-width=".6"/><path d="M1214 644V651L1210 647.500Z" fill="#000"/>
<rect x="1219" y="640" width="96" height="15" fill="#d4d0c8" stroke="#555" stroke-width=".7"/>
<rect x="1316" y="640" width="124" height="15" fill="#e8e6e0"/>
<!-- status -->
<rect x="786" y="655" width="654" height="22" fill="#d4d0c8"/>
<path d="M786 655.500H1440" stroke="#f4f2ec"/>
<text x="798" y="670" class="x" font-size="12">就绪</text>
<text x="1314" y="670" class="x" font-size="12">数字</text>
<g fill="none" stroke="#e4e2da"><rect x="1094.500" y="659.500" width="33" height="16"/><rect x="1132.500" y="659.500" width="111" height="16"/><rect x="1248.500" y="659.500" width="27" height="16"/><rect x="1280.500" y="659.500" width="27" height="16"/><rect x="1344.500" y="659.500" width="27" height="16"/><rect x="1376.500" y="659.500" width="27" height="16"/><rect x="1408.500" y="659.500" width="32" height="16"/></g>
<rect x="785" y="677" width="655" height="1.500" fill="#555"/>

<!-- X Y readout -->
<rect x="1276.500" y="678" width="1.500" height="92" fill="#2f6b5f"/>
<rect x="1277" y="724" width="163" height="47" fill="#55cfae"/>
<rect x="1277" y="724" width="163" height="2" fill="#3a7a6c"/>
<rect x="1438" y="678" width="2" height="92" fill="#2f6b5f"/>
<text x="1281" y="744" font-family="Liberation Mono" font-weight="bold" font-size="13.500" fill="#000" textLength="116">X = 9.435669"</text>
<text x="1281" y="760" font-family="Liberation Mono" font-weight="bold" font-size="13.500" fill="#000" textLength="125">Y = -0.385714"</text>

<!-- bottom bars -->
<rect x="0" y="770" width="1440" height="34" fill="#000"/>
<rect x="0" y="771" width="1440" height="33" fill="#ffffd8"/>
<rect x="2" y="771" width="31" height="33" fill="#fff"/><rect x="33" y="771" width="1" height="33" fill="#000"/>
<rect x="35" y="771" width="30" height="33" fill="#fff"/>
<rect x="5" y="775" width="25" height="25" fill="#ffffd8" stroke="#b8b890" stroke-width="1"/><rect x="8" y="778" width="18" height="19" fill="none" stroke="#000"/><path d="M10 780L24 795M24 789V795H18" stroke="#000" fill="none"/>
<rect x="37" y="775" width="25" height="25" fill="#ffffd8" stroke="#b8b890"/><rect x="40" y="778" width="18" height="19" fill="none" stroke="#000"/><path d="M41 795L56 782M41 795H57M47 786V781" stroke="#000" fill="none"/>
<text x="49" y="796" font-family="Liberation Sans" font-size="7" fill="#000">α</text>
<rect x="66" y="771" width="29" height="33" fill="#6aaa9c"/><rect x="70" y="775" width="21" height="25" fill="#ffffd8"/><rect x="73" y="779" width="15" height="17" fill="none" stroke="#000"/><path d="M73 787H88M80 787V796M73 783L77 779" stroke="#000" fill="none"/>
<text x="98" y="791" class="m" font-size="13">X Y :</text>
<rect x="144" y="773" width="172" height="29" fill="#ffffd8" stroke="#fff"/><rect x="146" y="775" width="168" height="25" fill="#ffffd8" stroke="#b0b090" stroke-width="2"/>
<path d="M152.500 777V791" stroke="#000" stroke-dasharray="1 1"/>
<rect x="317" y="771" width="30" height="33" fill="#6aaa9c"/><rect x="321" y="775" width="22" height="25" fill="#ffffd8"/><rect x="325" y="778" width="14" height="18" fill="none" stroke="#000"/><path d="M332 780V790M332 792V794" stroke="#000" stroke-width="1.300"/>
<rect x="348" y="771" width="1" height="33" fill="#2f6b5f"/>
<text x="352" y="791" class="m" font-size="11.700">&lt;M1&gt; - Select first area corner</text>
<rect x="1360" y="771" width="80" height="33" fill="#2f6b5f"/><rect x="1364" y="774" width="72" height="27" fill="#55cfae"/><rect x="1367" y="777" width="66" height="21" fill="#55cfae" stroke="#80e0c8"/>
<text x="1373" y="792" class="m" font-size="14">Inch</text>
<rect x="1418" y="786" width="12" height="5" fill="#b8ece0" stroke="#2f6b5f"/>
<rect x="0" y="804" width="1440" height="3" fill="#6f8886"/>
<rect x="2" y="807" width="1436" height="26" fill="#000"/>
<rect x="3" y="808" width="1434" height="24" fill="#fff"/>
<rect x="6" y="810" width="1430" height="21" fill="#6aa09c"/>
<rect x="6" y="810" width="1428" height="19" fill="#b0ffff"/>
<text x="720" y="824" class="m" font-size="11.500" text-anchor="middle" textLength="454">ts,#628,Line,XS=439.6391875,YS=5,XE=1.2320675,YE=5,r254,POS,Ang=0</text>
<rect x="0" y="833" width="1440" height="7" fill="#c8cecc"/><rect x="0" y="838" width="1440" height="2" fill="#666"/>
</svg>
</body></html>
